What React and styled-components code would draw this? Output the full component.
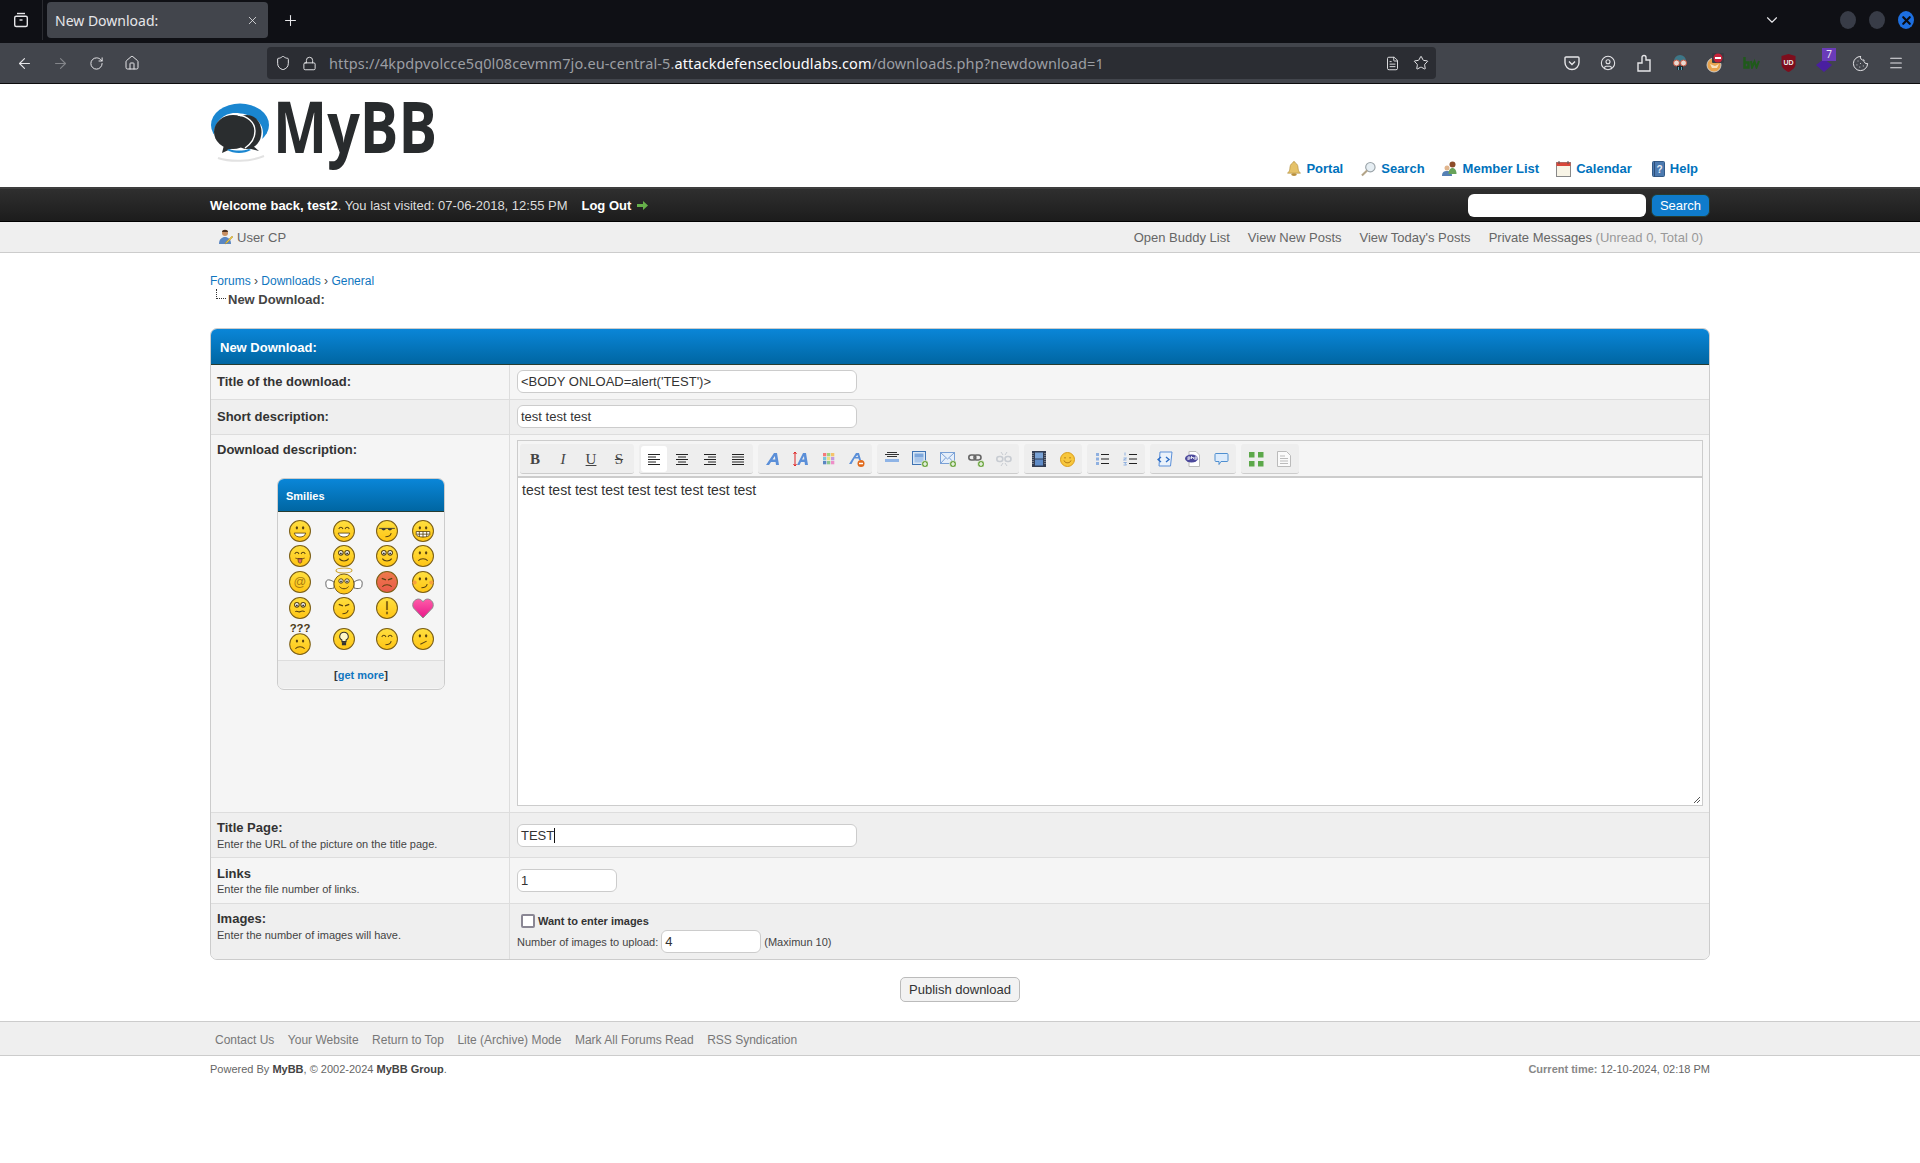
import React from "react";
import styled, { createGlobalStyle } from "styled-components";
import {
  ArrowLeft,
  ArrowRight,
  RotateCw,
  Home,
  Shield,
  Lock,
  Star,
  Menu,
  Plus,
  X,
  ChevronDown,
  CircleUser,
  Cookie,
  FileText,
} from "lucide-react";

const GlobalStyle = createGlobalStyle`
  html, body { margin: 0; padding: 0; background: #fff; }
  body {
    font-family: "Liberation Sans", Arial, sans-serif;
    font-size: 13px;
    color: #333;
  }
  * { box-sizing: border-box; }
`;

/* browser chrome */
const TabBar = styled.div`
  height: 43px;
  padding-bottom: 3px;
  background: #0f1015;
  display: flex;
  align-items: center;
  color: #e6e6e9;
`;
const ViewButton = styled.div`
  width: 43px;
  height: 100%;
  display: flex;
  align-items: center;
  justify-content: center;
  border-right: 1px solid #2a2b30;
`;
const Tab = styled.div`
  width: 221px;
  height: 36px;
  margin-left: 4px;
  padding: 0 9px 0 8px;
  background: #42454c;
  border-radius: 4px;
  display: flex;
  align-items: center;
  justify-content: space-between;
  font-family: "Noto Sans", sans-serif;
  font-size: 14px;
`;
const NewTab = styled.div`
  width: 44px;
  display: flex;
  justify-content: center;
`;
const TabBarRight = styled.div`
  margin-left: auto;
  display: flex;
  align-items: center;
  padding-right: 6px;
`;
const AllTabs = styled.div`
  display: flex;
  margin-right: 46px;
`;
const WindowDot = styled.div`
  width: 16px;
  height: 18px;
  margin-left: 13px;
  border-radius: 50%;
  background: ${(p) => (p.$close ? "#1d6fe0" : "#383c47")};
  color: #0b0c10;
  display: flex;
  align-items: center;
  justify-content: center;
`;
const NavBar = styled.div`
  height: 41px;
  background: #42454c;
  border-bottom: 1px solid #0c0c0d;
  padding: 0 6px;
  display: flex;
  align-items: center;
  color: #e6e6e9;
`;
const NavButton = styled.div`
  width: 36px;
  display: flex;
  justify-content: center;
  align-items: center;
  position: relative;
  color: ${(p) => (p.$off ? "#83858a" : "#e6e6e9")};
`;
const UrlBar = styled.div`
  width: 1169px;
  height: 32px;
  margin-left: 117px;
  background: #2b2d33;
  border-radius: 4px;
  display: flex;
  align-items: center;
  padding: 0 7px 0 8px;
  gap: 11px;
`;
const UrlText = styled.div`
  font-family: "Noto Sans", sans-serif;
  font-size: 14.5px;
  letter-spacing: 0.12px;
  color: #9c9ea3;
  margin-left: 1px;
  white-space: nowrap;
  flex: 1;
  b {
    font-weight: 400;
    color: #fbfbfe;
  }
`;
const UrlRight = styled.div`
  display: flex;
  gap: 13px;
  align-items: center;
`;
const NavRight = styled.div`
  margin-left: auto;
  display: flex;
`;
const Badge = styled.span`
  position: absolute;
  top: -5px;
  right: 6px;
  width: 14px;
  height: 13px;
  background: #6a3bb8;
  color: #e9e5f5;
  font-size: 10px;
  line-height: 13px;
  text-align: center;
  font-family: "Noto Sans", sans-serif;
`;

/* forum header */
const Wrap = styled.div`
  width: 1500px;
  margin: 0 auto;
`;
const Header = styled.div`
  height: 103px;
  display: flex;
  justify-content: space-between;
`;
const LogoLink = styled.div`
  padding-top: 16px;
  height: 88px;
`;
const LogoSvg = styled.svg`
  overflow: visible;
`;
const TopMenu = styled.div`
  align-self: flex-end;
  display: flex;
  gap: 17px;
  padding: 0 12px 9px 0;
`;
const TopLink = styled.a`
  display: flex;
  align-items: center;
  gap: 5px;
  margin-left: ${(p) => p.$extra || 0}px;
  font-weight: bold;
  color: #0072bc;
  font-size: 13px;
  line-height: 18px;
`;
const WelcomeBar = styled.div`
  height: 35px;
  background: linear-gradient(#2f2f2f, #1c1c1c);
  border-top: 2px solid #3d3d3d;
  border-bottom: 1px solid #000;
  color: #ddd;
`;
const WelcomeInner = styled(Wrap)`
  height: 100%;
  display: flex;
  align-items: center;
  justify-content: space-between;
  b {
    color: #fff;
  }
`;
const LogOut = styled.a`
  font-weight: bold;
  color: #fff;
  margin-left: 14px;
  display: inline-flex;
  align-items: center;
  gap: 6px;
`;
const QuickSearch = styled.div`
  display: flex;
  gap: 5px;
`;
const SearchBox = styled.div`
  width: 178px;
  height: 23px;
  background: #fff;
  border-radius: 6px;
`;
const SearchButton = styled.div`
  width: 59px;
  height: 23px;
  border-radius: 6px;
  background: #0f7bcb;
  border: 1px solid #263c30;
  color: #fff;
  text-align: center;
  line-height: 21px;
`;
const UserBar = styled.div`
  height: 31px;
  background: #efefef;
  border-bottom: 1px solid #ccc;
  color: #666;
`;
const UserInner = styled(Wrap)`
  height: 100%;
  display: flex;
  align-items: center;
  justify-content: space-between;
  padding: 0 7px 0 8px;
`;
const UserCp = styled.span`
  display: flex;
  align-items: center;
  gap: 3px;
`;
const UserLinks = styled.div`
  display: flex;
  gap: 18px;
  span {
    color: #999;
  }
`;

/* breadcrumb */
const Breadcrumb = styled.div`
  padding-top: 21px;
  height: 75px;
  font-size: 12px;
  line-height: 15px;
  color: #444;
  a {
    color: #0f76c0;
  }
`;
const Active = styled.div`
  position: relative;
  margin-top: 3px;
  padding-left: 18px;
  font-size: 13px;
  font-weight: bold;
  color: #444;
  line-height: 15px;
  &::before {
    content: "";
    position: absolute;
    left: 6px;
    top: -3px;
    width: 9px;
    height: 9px;
    border-left: 1px dotted #333;
    border-bottom: 1px dotted #333;
  }
`;

/* form table */
const Table = styled.div`
  border: 1px solid #ccc;
  border-radius: 7px;
  overflow: hidden;
  background: #f5f5f5;
`;
const TableHead = styled.div`
  height: 36px;
  background: linear-gradient(#0a86d8, #0066a2);
  border-bottom: 1px solid #263c30;
  color: #fff;
  font-weight: bold;
  padding: 11px 9px 0;
  line-height: 15px;
`;
const Row = styled.div`
  display: grid;
  grid-template-columns: 299px 1fr;
  height: ${(p) => p.$h}px;
  background: ${(p) => (p.$alt ? "#efefef" : "#f5f5f5")};
  border-bottom: ${(p) => (p.$last ? "0" : "1px solid #ddd")};
`;
const LabelCell = styled.div`
  border-right: 1px solid #ddd;
  padding: ${(p) => p.$top}px 6px 0;
`;
const ValueCell = styled.div`
  padding: ${(p) => p.$top}px 7px 0;
`;
const Label = styled.div`
  font-weight: bold;
  color: #333;
  line-height: 16px;
`;
const Desc = styled.div`
  font-size: 11px;
  color: #444;
  line-height: 15px;
  margin-top: ${(p) => (p.$tight ? 0 : 1)}px;
`;
const TextInput = styled.div`
  width: ${(p) => p.$w}px;
  height: 23px;
  background: #fff;
  border: 1px solid #ccc;
  border-radius: 6px;
  padding: 0 3px;
  line-height: 21px;
  font-size: 13px;
  color: #333;
  white-space: nowrap;
`;
const Caret = styled.span`
  display: inline-block;
  width: 1px;
  height: 15px;
  background: #111;
  vertical-align: -3px;
`;
const ImageOption = styled.div`
  display: flex;
  align-items: center;
  gap: 3px;
  font-size: 11px;
  font-weight: bold;
  color: #333;
  padding-left: 4px;
  height: 15px;
`;
const CheckBox = styled.span`
  width: 14px;
  height: 14px;
  background: #fff;
  border: 2px solid #8a8794;
  border-radius: 2px;
`;
const ImageCount = styled.div`
  display: flex;
  align-items: center;
  gap: 3px;
  font-size: 11px;
  color: #444;
  margin-top: 2px;
`;

/* smilies */
const SmiliesBox = styled.div`
  width: 168px;
  height: 212px;
  margin: 20px 0 0 60px;
  border: 1px solid #ccc;
  border-radius: 7px;
  overflow: hidden;
`;
const SmiliesHead = styled.div`
  height: 33px;
  background: linear-gradient(#0a86d8, #0066a2);
  border-bottom: 1px solid #263c30;
  color: #fff;
  font-size: 11px;
  font-weight: bold;
  line-height: 34px;
  padding-left: 8px;
`;
const SmiliesGrid = styled.div`
  display: grid;
  grid-template-columns: 44px 44px 42px 30px;
  grid-template-rows: 25px 26px 26px 26px 36px;
  padding: 6px 0 0 0;
  justify-items: center;
  height: 148px;
`;
const SmileyCell = styled.div`
  display: flex;
  align-items: center;
  justify-content: center;
`;
const GetMore = styled.div`
  height: 28px;
  border-top: 1px solid #ddd;
  background: #efefef;
  text-align: center;
  font-size: 11px;
  font-weight: bold;
  line-height: 29px;
  a {
    color: #0f76c0;
  }
`;

/* editor */
const Editor = styled.div`
  width: 1186px;
  height: 366px;
  background: #fff;
  border: 1px solid #ccc;
  position: relative;
`;
const EditorToolbar = styled.div`
  height: 37px;
  background: #f5f5f5;
  border-bottom: 2px solid #ccc;
  padding: 3px 0 0 2px;
  display: flex;
  gap: 5px;
`;
const ToolGroup = styled.div`
  height: 30px;
  padding: 0 1px;
  background: #eee;
  border-bottom: 1px solid #ccc;
  border-radius: 3px;
  display: flex;
`;
const ToolButton = styled.div`
  width: 28px;
  height: 30px;
  display: flex;
  align-items: center;
  justify-content: center;
  position: relative;
  &::before {
    content: "";
    display: ${(p) => (p.$active ? "block" : "none")};
    position: absolute;
    left: 1px;
    top: 2px;
    width: 26px;
    height: 26px;
    background: #fff;
    border-radius: 3px;
  }
  svg {
    position: relative;
  }
`;
const LetterIcon = styled.span`
  font-family: "Liberation Serif", serif;
  font-size: 15px;
  font-weight: ${(p) => (p.$bold ? "bold" : "normal")};
  font-style: ${(p) => (p.$italic ? "italic" : "normal")};
  text-decoration: ${(p) =>
    p.$under ? "underline" : p.$strike ? "line-through" : "none"};
  color: #444;
`;
const EditorText = styled.div`
  padding: 2px 4px;
  font-size: 14px;
  line-height: 20px;
  color: #333;
`;
const Grip = styled.svg`
  position: absolute;
  right: 1px;
  bottom: 1px;
`;

const SubmitRow = styled.div`
  display: flex;
  justify-content: center;
  padding-top: 17px;
  height: 61px;
`;
const SubmitButton = styled.div`
  width: 120px;
  height: 25px;
  background: #f2f2f2;
  border: 1px solid #bbb;
  border-radius: 5px;
  text-align: center;
  line-height: 23px;
  color: #333;
`;

/* footer */
const FooterBar = styled.div`
  height: 35px;
  background: #efefef;
  border-top: 1px solid #ccc;
  border-bottom: 1px solid #ccc;
`;
const FooterLinks = styled(Wrap)`
  height: 100%;
  padding: 2px 0 0 5px;
  display: flex;
  align-items: center;
  gap: 13.5px;
  font-size: 12px;
  color: #777;
`;
const Copy = styled(Wrap)`
  display: flex;
  justify-content: space-between;
  font-size: 11px;
  line-height: 14px;
  padding-top: 6px;
  color: #666;
  b {
    color: #444;
  }
  div b {
    color: #888;
  }
`;

const ViewIcon = () => (
  <svg width="16" height="16" viewBox="0 0 16 16" fill="none" stroke="#e6e6e9" strokeWidth="1.4">
    <path d="M4 1.5h8" />
    <rect x="1.7" y="4.2" width="12.6" height="10.3" rx="1.5" />
    <path d="M6.5 8h3" />
  </svg>
);

const PocketIcon = () => (
  <svg width="16" height="16" viewBox="0 0 16 16" fill="none" stroke="#e6e6e9" strokeWidth="1.4">
    <path d="M2 2h12a1 1 0 0 1 1 1v4.5A7 7 0 0 1 1 7.5V3a1 1 0 0 1 1-1z" />
    <path d="M5 6.5l3 3 3-3" />
  </svg>
);

const ProfileIcon = () => <CircleUser size={16} strokeWidth={1.6} />;

const PuzzleIcon = () => (
  <svg width="14" height="18" viewBox="0 0 14 18" fill="none" stroke="#e6e6e9" strokeWidth="1.4">
    <path d="M1 17V9h4V3.500a2 2 0 0 1 4 0V6h4v11z" />
  </svg>
);

const MaskIcon = () => (
  <svg width="16" height="18" viewBox="0 0 16 18">
    <path d="M2 7a6 6 0 0 1 12 0v2H2z" fill="#3d7687" />
    <circle cx="4.500" cy="9" r="3" fill="#e9d9d0" stroke="#c9563f" />
    <circle cx="11.500" cy="9" r="3" fill="#e9d9d0" stroke="#c9563f" />
    <path d="M5 12h6v4H5z" fill="#1f2a30" />
    <path d="M6 13h1v3H6zM9 13h1v3H9z" fill="#58a2b8" />
  </svg>
);

const FoxIcon = () => (
  <svg width="20" height="20" viewBox="0 0 20 20">
    <circle cx="8" cy="12" r="7" fill="#e8a34d" stroke="#d6dadf" strokeWidth=".8" />
    <path d="M4 11l5 2 4-2-2 4H6z" fill="#f7e1bf" />
    <rect x="6" y="0" width="12" height="10" rx="1" fill="#3a3c42" />
    <circle cx="12" cy="5" r="4.500" fill="#c8223a" />
    <rect x="9" y="4" width="6" height="2" fill="#fff" />
  </svg>
);

const ShieldRed = () => (
  <svg width="15" height="18" viewBox="0 0 15 18">
    <path d="M7.500 0l7 2v8c0 4-4 6.500-7 8-3-1.500-7-4-7-8V2z" fill="#7e0d1c" />
    <text x="7.500" y="11" textAnchor="middle" fontSize="7" fontWeight="bold" fontFamily="Liberation Sans" fill="#eee">
      UD
    </text>
  </svg>
);

const StackIcon = () => (
  <svg width="18" height="18" viewBox="0 0 18 18">
    <path d="M9 5l8 6-8 7-8-7z" fill="#4a1fa0" />
  </svg>
);

const BwIcon = () => (
  <svg width="18" height="12" viewBox="0 0 18 12" fill="none" stroke="#1f5a1a" strokeWidth="2.4">
    <path d="M1.500 0v10.500h4v-5h-4" />
    <path d="M8 4l1 6.500 2.500-6 2 6 2.500-6.500" strokeWidth="2" />
  </svg>
);

const MyBBLogo = () => (
  <LogoSvg width="230" height="72" viewBox="0 0 230 72">
    <path d="M8 58c12 4 32 4 46-2" fill="none" stroke="#e2e2e2" strokeWidth="2" />
    <ellipse cx="30" cy="25" rx="29" ry="21.500" fill="#1a86d0" />
    <path d="M4 34C4 22 14 13 25 13c12 0 28 6 28 20 0 7-3 12-7 14l7 7-13-4c-6 2-13 2-18 0L9 57l3-11C7 43 4 39 4 34z" fill="#fff" />
    <ellipse cx="37" cy="32" rx="14.500" ry="17" fill="#2a2d2f" />
    <ellipse cx="23" cy="32" rx="19" ry="17" fill="#2a2d2f" />
    <path d="M14 45l-2 8 11-5z" fill="#2a2d2f" />
    <path d="M41 44l8 7-12-3z" fill="#2a2d2f" />
    <path d="M19 49c6 2 14 2 20 0l2 1c-7 4-17 4-24 0z" fill="#1a86d0" />
    <path d="M28 15c9 1 17 7 17 16 0 7-4 13-10 17" fill="none" stroke="#fff" strokeWidth="1.400" />
    <text
      x="63"
      y="53"
      fontFamily="'Open Sans', sans-serif"
      fontWeight="700"
      fontSize="71"
      fill="#282b2d"
      textLength="164"
      lengthAdjust="spacingAndGlyphs"
    >
      MyBB
    </text>
  </LogoSvg>
);

const BellIcon = () => (
  <svg width="14" height="16" viewBox="0 0 15 16">
    <path d="M7.500 0c1 0 1.300.8 1.300 1.500C11.500 2.500 11.800 5 12 8c.2 2 1 3 2.500 4.500H.5C2 11 2.800 10 3 8c.2-3 .5-5.500 3.200-6.500C6.200.8 6.500 0 7.500 0z" fill="#e5c26a" stroke="#a88330" strokeWidth=".6" />
    <ellipse cx="7.500" cy="14" rx="3" ry="1.500" fill="#b98f3b" />
  </svg>
);
const GlassIcon = () => (
  <svg width="15" height="16" viewBox="0 0 16 16">
    <circle cx="10" cy="6" r="5" fill="#e6eef3" stroke="#9aa3a8" strokeWidth="1.200" />
    <path d="M6.500 9.500L1 15" stroke="#b3a488" strokeWidth="2.200" />
  </svg>
);
const MembersIcon = () => (
  <svg width="16" height="16" viewBox="0 0 16 16">
    <circle cx="5" cy="7" r="2.500" fill="#e1b58d" />
    <path d="M0 15c0-4 2-5 5-5s5 1 5 5z" fill="#5580b5" />
    <circle cx="10.500" cy="3.500" r="3" fill="#8c4c2a" />
    <path d="M6.500 13c0-4 2-6 4-6s4 2 4 6z" fill="#68a35a" />
  </svg>
);
const CalendarIcon = () => (
  <svg width="15" height="16" viewBox="0 0 15 16">
    <rect x=".5" y="1.500" width="14" height="14" fill="#f8f4e6" stroke="#888" />
    <rect x=".5" y="1.500" width="14" height="3.500" fill="#d9473a" />
    <path d="M3 0v3M12 0v3" stroke="#555" />
  </svg>
);
const HelpIcon = () => (
  <svg width="13" height="16" viewBox="0 0 13 16">
    <rect x=".5" y=".5" width="12" height="15" rx="1" fill="#4c7ab0" stroke="#335a86" />
    <path d="M2.500.5v15" stroke="#2d4f78" />
    <text x="4.500" y="12" fontSize="10" fontWeight="bold" fontFamily="Liberation Sans" fill="#e8eef5">?</text>
  </svg>
);
const UserCpIcon = () => (
  <svg width="16" height="16" viewBox="0 0 16 16">
    <circle cx="7" cy="4" r="3" fill="#c98f62" />
    <path d="M4 3c0-3 6-3 6 0z" fill="#4a3020" />
    <path d="M1 15c0-5 3-7 6-7s6 2 6 7z" fill="#5a86c2" />
    <path d="M8 13l6-6 1 1-6 6-2 1z" fill="#e8c53d" stroke="#a3802a" strokeWidth=".4" />
  </svg>
);
const LogoutArrow = () => (
  <svg width="11" height="9" viewBox="0 0 11 9">
    <path d="M0 3h6V0l5 4.500L6 9V6H0z" fill="#66b04a" />
  </svg>
);

const lines = (rows) => (
  <svg width="14" height="14" viewBox="0 0 14 14" stroke="#222" strokeWidth="1">
    {rows.map(([x1, x2], i) => (
      <path key={i} d={`M${x1} ${2.5 + i * 2.5}H${x2}`} />
    ))}
  </svg>
);

const Plusdot = () => (
  <g>
    <circle cx="13" cy="13" r="3.500" fill="#6aa33e" stroke="#fff" strokeWidth=".6" />
    <path d="M11 13h4M13 11v4" stroke="#fff" strokeWidth="1.200" />
  </g>
);

const toolIcons = {
  bold: <LetterIcon $bold>B</LetterIcon>,
  italic: <LetterIcon $italic>I</LetterIcon>,
  underline: <LetterIcon $under>U</LetterIcon>,
  strike: <LetterIcon $strike>S</LetterIcon>,
  left: lines([[1, 13], [1, 9], [1, 13], [1, 9], [1, 13]]),
  center: lines([[1, 13], [3, 11], [1, 13], [3, 11], [1, 13]]),
  right: lines([[1, 13], [5, 13], [1, 13], [5, 13], [1, 13]]),
  justify: lines([[1, 13], [1, 13], [1, 13], [1, 13], [1, 13]]),
  font: (
    <svg width="16" height="16" viewBox="0 0 16 16">
      <path d="M1 14L9 2h3l2 12h-3l-.4-3H6l-2 3zM7.500 8.500h2.800L9.900 5z" fill="#5b8fd8" fillRule="evenodd" />
    </svg>
  ),
  size: (
    <svg width="16" height="16" viewBox="0 0 16 16">
      <path d="M4 14l6-12h3l2 12h-3l-.4-3H8l-1.500 3zM9 8.500h2.300L11 5z" fill="#5b8fd8" fillRule="evenodd" />
      <path d="M2 1v14" stroke="#d22" />
      <path d="M.5 3L2 1l1.500 2M.5 13L2 15l1.500-2" fill="none" stroke="#d22" />
    </svg>
  ),
  color: (
    <svg width="12" height="12" viewBox="0 0 12 12">
      {["#f47a7a", "#a0d27c", "#f6c36a", "#7cc4d9", "#f0e080", "#c29ae0", "#5a86c2", "#8fc78f", "#ee8ec8"].map((c, i) => (
        <rect key={c} x={(i % 3) * 4} y={Math.floor(i / 3) * 4} width="3.300" height="3.300" fill={c} />
      ))}
    </svg>
  ),
  removeformat: (
    <svg width="16" height="16" viewBox="0 0 16 16">
      <path d="M0 13L7 2h3l2 7h-2l-.4-1.500H5.500L2.500 13zM6.500 6h2.500L8.500 4z" fill="#5b8fd8" fillRule="evenodd" />
      <circle cx="12" cy="12.500" r="3.500" fill="#e06a1c" />
      <path d="M10 12.500h4" stroke="#fff" strokeWidth="1.300" />
    </svg>
  ),
  hr: (
    <svg width="16" height="16" viewBox="0 0 16 16">
      <path d="M3 1.500h10M1 3.500h14M3 5.500h10" stroke="#333" />
      <rect x="1" y="8" width="14" height="3" fill="#8fb4e6" />
    </svg>
  ),
  image: (
    <svg width="16" height="16" viewBox="0 0 16 16">
      <rect x=".5" y=".5" width="13" height="13" fill="#d8e6f5" stroke="#3f74b4" />
      <rect x="2.500" y="2.500" width="9" height="4" fill="#7da7dc" />
      <rect x="2.500" y="6.500" width="9" height="5" fill="#a9c6ea" />
      <Plusdot />
    </svg>
  ),
  email: (
    <svg width="16" height="16" viewBox="0 0 16 16">
      <rect x=".5" y="1.500" width="14" height="11" fill="#e6effa" stroke="#7aa1d6" />
      <path d="M1 2l6.500 6L14 2M1 12l4.500-5M14 12L9.500 7" fill="none" stroke="#7aa1d6" />
      <Plusdot />
    </svg>
  ),
  link: (
    <svg width="16" height="16" viewBox="0 0 16 16" fill="none">
      <rect x=".8" y="4" width="7" height="5" rx="2.500" stroke="#666" strokeWidth="1.600" />
      <rect x="6" y="4" width="7" height="5" rx="2.500" stroke="#666" strokeWidth="1.600" />
      <Plusdot />
    </svg>
  ),
  unlink: (
    <svg width="16" height="16" viewBox="0 0 16 16" fill="none" stroke="#c8ccd2" strokeWidth="1.600">
      <rect x=".8" y="5.500" width="6" height="5" rx="2.500" />
      <rect x="9" y="5.500" width="6" height="5" rx="2.500" />
      <path d="M5 1l2 3M11 1L9 4M5 15l2-3M11 15l-2-3" strokeWidth="1" />
    </svg>
  ),
  video: (
    <svg width="14" height="16" viewBox="0 0 14 16">
      <rect width="14" height="16" fill="#333d52" />
      <rect x="3" y="1.500" width="8" height="6" fill="#7aa3d6" />
      <rect x="3" y="8.500" width="8" height="6" fill="#5f8cc8" />
      <path d="M1 2v12M13 2v12" stroke="#bbb" strokeDasharray="1 1" />
    </svg>
  ),
  emoticon: (
    <svg width="15" height="15" viewBox="0 0 15 15">
      <circle cx="7.500" cy="7.500" r="7" fill="#f7c73d" stroke="#d99c1c" />
      <path d="M4 8.500c1 3 6 3 7 0" fill="none" stroke="#a86f10" />
      <path d="M5 5v1.500M10 5v1.500" stroke="#a86f10" />
    </svg>
  ),
  bullet: (
    <svg width="14" height="14" viewBox="0 0 14 14">
      <g fill="#8fb0e0">
        <rect x="1" y="1" width="3" height="3" />
        <rect x="1" y="5.500" width="3" height="3" />
        <rect x="1" y="10" width="3" height="3" />
      </g>
      <path d="M6 2.500h8M6 7h8M6 11.500h8" stroke="#222" />
    </svg>
  ),
  ordered: (
    <svg width="14" height="14" viewBox="0 0 14 14">
      <path d="M2 0.500v3M.5 6h3l-3 2h3M.5 10.500h3l-1.500 1 1.500 1.500h-3" fill="none" stroke="#8fb0e0" />
      <path d="M6 2.500h8M6 7h8M6 11.500h8" stroke="#222" />
    </svg>
  ),
  code: (
    <svg width="16" height="16" viewBox="0 0 16 16">
      <path d="M3 1h12l-1.500 14H2z" fill="#eaf2fb" stroke="#5b8fd8" />
      <path d="M4 6L1 8.500 4 11M9 6l3 2.500L9 11" fill="none" stroke="#2f6fc6" strokeWidth="1.400" />
    </svg>
  ),
  php: (
    <svg width="16" height="16" viewBox="0 0 16 16">
      <path d="M4 .5h7l3.500 3.500v11.500H4z" fill="#fff" stroke="#bbb" />
      <ellipse cx="6.500" cy="7.500" rx="6.500" ry="4" fill="#4d4a9c" />
      <path d="M3 9V6h2v2H3M6.500 5v3M6.500 6.500h2V8M10 9V6h2v2h-2" fill="none" stroke="#fff" strokeWidth=".8" />
    </svg>
  ),
  quote: (
    <svg width="15" height="15" viewBox="0 0 15 15">
      <path d="M2 1.500h11a1 1 0 0 1 1 1v6a1 1 0 0 1-1 1H7l-2 3v-3H2a1 1 0 0 1-1-1v-6a1 1 0 0 1 1-1z" fill="#dcebfb" stroke="#4f8fd0" />
    </svg>
  ),
  maximize: (
    <svg width="16" height="16" viewBox="0 0 16 16" fill="#5ca84a">
      <rect x="1" y="1" width="5.500" height="5.500" />
      <rect x="10" y="1" width="5.500" height="5.500" />
      <rect x="1" y="10" width="5.500" height="5.500" />
      <rect x="10" y="10" width="5.500" height="5.500" />
    </svg>
  ),
  source: (
    <svg width="14" height="16" viewBox="0 0 14 16">
      <path d="M.5.500h9l4 4v11H.5z" fill="#fafafa" stroke="#bbb" />
      <path d="M3 5h5M3 7.500h8M3 10h8M3 12.500h8" stroke="#bbb" />
    </svg>
  ),
};

const toolGroups = [
  ["bold", "italic", "underline", "strike"],
  ["left", "center", "right", "justify"],
  ["font", "size", "color", "removeformat"],
  ["hr", "image", "email", "link", "unlink"],
  ["video", "emoticon"],
  ["bullet", "ordered"],
  ["code", "php", "quote"],
  ["maximize", "source"],
];

const eyes = {
  dot: (
    <>
      <ellipse cx="7.500" cy="7.500" rx="1.100" ry="1.500" fill="#5a4310" />
      <ellipse cx="13.500" cy="7.500" rx="1.100" ry="1.500" fill="#5a4310" />
    </>
  ),
  arc: <path d="M5.500 8.500c1-2 3-2 4 0M11.500 8.500c1-2 3-2 4 0" fill="none" stroke="#5a4310" />,
  round: (
    <>
      <circle cx="7.500" cy="7.500" r="2.200" fill="#fff" stroke="#5a4310" />
      <circle cx="13.500" cy="7.500" r="2.200" fill="#fff" stroke="#5a4310" />
      <circle cx="7.500" cy="8" r=".9" fill="#333" />
      <circle cx="13.500" cy="8" r=".9" fill="#333" />
    </>
  ),
  shades: <path d="M3 8h15M5.500 8.500a2 2 0 0 0 3.500 0zM11.500 8.500a2 2 0 0 0 3.500 0z" fill="#333" stroke="#333" strokeWidth=".8" />,
  flat: <path d="M5.500 7l4 1.500M15.500 7l-4 1.500" stroke="#5a4310" strokeWidth="1.200" />,
  wink: <path d="M5.500 8.500h4M11.500 8.500h4" stroke="#5a4310" />,
};
const mouths = {
  grin: <path d="M5 12.500h11c-1 5-10 5-11 0z" fill="#fff" stroke="#5a4310" strokeWidth=".8" />,
  smile: <path d="M6 13c2 3 7 3 9 0" fill="none" stroke="#5a4310" />,
  smirk: <path d="M9 16c3 0 5-1 5.500-3.500" fill="none" stroke="#5a4310" />,
  teeth: <path d="M4 11h13v3c-1 3-12 3-13 0zM7 11v5M10.500 11v5.500M14 11v5M4 13.500h13" fill="#fff" stroke="#5a4310" strokeWidth=".8" />,
  tongue: <path d="M6 12.500c3 1 6 1 9 0M8.500 13l.5 3.500c1 1 2.500 1 3 0l.5-3.500z" fill="#ea6a6a" stroke="#5a4310" strokeWidth=".7" />,
  sad: <path d="M6 15c2-2.500 7-2.500 9 0" fill="none" stroke="#5a4310" />,
  wave: <path d="M6 14c1.500-1.500 2.500 1 4.500 0s3-1 4.500 0" fill="none" stroke="#5a4310" />,
  oblique: <path d="M8 15.500l6-3" fill="none" stroke="#5a4310" />,
};

const Face = ({ eye, mouth, fill = "url(#sm)", children }) => (
  <svg width="22" height="22" viewBox="0 0 21 21">
    <circle cx="10.500" cy="10.500" r="10" fill={fill} stroke="#7c5f17" />
    {eyes[eye]}
    {mouths[mouth]}
    {children}
  </svg>
);

const AngelFace = () => (
  <svg width="38" height="30" viewBox="0 0 38 30">
    <path d="M9 15C3 11 0 13 1 18c0 4 4 4 8 3zM29 15c6-4 9-2 8 3 0 4-4 4-8 3z" fill="#fff" stroke="#444" strokeWidth=".8" />
    <ellipse cx="19" cy="3.500" rx="8" ry="2.500" fill="none" stroke="#cfa93c" strokeWidth="1.200" />
    <circle cx="19" cy="17" r="10" fill="url(#sm)" stroke="#7c5f17" />
    <g transform="translate(8.500 6.500)">
      {eyes.round}
      {mouths.smile}
    </g>
  </svg>
);

const QuestionFace = () => (
  <svg width="22" height="36" viewBox="0 0 21 35">
    <text x="10.500" y="10.500" textAnchor="middle" fontSize="11" fontWeight="bold" fontFamily="Liberation Sans" fill="#4a3a18">???</text>
    <g transform="translate(0 12)">
      <circle cx="10.500" cy="10.500" r="10" fill="url(#sm)" stroke="#7c5f17" />
      {eyes.dot}
      {mouths.sad}
    </g>
  </svg>
);

const Heart = () => (
  <svg width="22" height="21" viewBox="0 0 22 21">
    <path d="M11 20L1.500 10C-1 5 3 1 6.500 1 9 1 10.500 3 11 4c.5-1 2-3 4.500-3C19 1 23 5 20.500 10z" fill="url(#hr)" stroke="#8d8d8d" />
  </svg>
);

const SmileyDefs = () => (
  <svg width="0" height="0" style={{ position: "absolute" }}>
    <defs>
      <linearGradient id="sm" x1="0" y1="0" x2="0" y2="1">
        <stop offset="0" stopColor="#ffe040" />
        <stop offset="1" stopColor="#ffc414" />
      </linearGradient>
      <linearGradient id="rd" x1="0" y1="0" x2="0" y2="1">
        <stop offset="0" stopColor="#ee7a4a" />
        <stop offset="1" stopColor="#e85a4a" />
      </linearGradient>
      <linearGradient id="hr" x1="0" y1="0" x2="0" y2="1">
        <stop offset="0" stopColor="#ff5ca8" />
        <stop offset="1" stopColor="#e8188a" />
      </linearGradient>
    </defs>
  </svg>
);

const smilies = [
  <Face eye="dot" mouth="grin" />,
  <Face eye="arc" mouth="grin" />,
  <Face eye="shades" mouth="smirk" />,
  <Face eye="dot" mouth="teeth" />,
  <Face eye="arc" mouth="tongue" />,
  <Face eye="round" mouth="smile" />,
  <Face eye="round" mouth="smile" />,
  <Face eye="dot" mouth="sad" />,
  <Face eye="none" mouth="none">
    <text x="10.500" y="14.500" textAnchor="middle" fontSize="12" fontFamily="Liberation Sans" fill="#a97c10">@</text>
  </Face>,
  <AngelFace />,
  <Face eye="flat" mouth="sad" fill="url(#rd)" />,
  <Face eye="dot" mouth="smirk">
    <circle cx="2.500" cy="11" r="2" fill="#f7a13d" />
    <circle cx="18.500" cy="11" r="2" fill="#f7a13d" />
  </Face>,
  <Face eye="round" mouth="wave" />,
  <Face eye="flat" mouth="smirk" />,
  <Face eye="none" mouth="none">
    <rect x="9.500" y="4" width="2" height="8.500" fill="#8a6a12" />
    <rect x="9.500" y="14" width="2" height="2.500" fill="#8a6a12" />
  </Face>,
  <Heart />,
  <QuestionFace />,
  <Face eye="none" mouth="none">
    <path d="M10.500 4a4 4 0 0 0-2 7.500V13h4v-1.500a4 4 0 0 0-2-7.500z" fill="#fff8c9" stroke="#333" />
    <rect x="8.500" y="13.500" width="4" height="3" fill="#333" />
  </Face>,
  <Face eye="arc" mouth="smirk" />,
  <Face eye="dot" mouth="oblique" />,
];

const topLinks = [
  { icon: <BellIcon />, text: "Portal" },
  { icon: <GlassIcon />, text: "Search", extra: 1 },
  { icon: <MembersIcon />, text: "Member List" },
  { icon: <CalendarIcon />, text: "Calendar" },
  { icon: <HelpIcon />, text: "Help", extra: 3 },
];

const footerLinks = [
  "Contact Us",
  "Your Website",
  "Return to Top",
  "Lite (Archive) Mode",
  "Mark All Forums Read",
  "RSS Syndication",
];

const App = () => {
  return (
    <>
      <GlobalStyle />
      <SmileyDefs />
      <TabBar>
        <ViewButton>
          <ViewIcon />
        </ViewButton>
        <Tab>
          New Download:
          <X size={13} strokeWidth={1.5} />
        </Tab>
        <NewTab>
          <Plus size={17} strokeWidth={1.5} />
        </NewTab>
        <TabBarRight>
          <AllTabs>
            <ChevronDown size={18} strokeWidth={1.5} />
          </AllTabs>
          <WindowDot />
          <WindowDot />
          <WindowDot $close>
            <X size={13} strokeWidth={4} />
          </WindowDot>
        </TabBarRight>
      </TabBar>
      <NavBar>
        <NavButton>
          <ArrowLeft size={17} strokeWidth={1.6} />
        </NavButton>
        <NavButton $off>
          <ArrowRight size={17} strokeWidth={1.6} />
        </NavButton>
        <NavButton>
          <RotateCw size={15} strokeWidth={1.6} />
        </NavButton>
        <NavButton>
          <Home size={16} strokeWidth={1.5} />
        </NavButton>
        <UrlBar>
          <Shield size={16} strokeWidth={1.5} />
          <Lock size={15} strokeWidth={1.5} />
          <UrlText>
            https://4kpdpvolcce5q0l08cevmm7jo.eu-central-5.<b>attackdefensecloudlabs.com</b>/downloads.php?newdownload=1
          </UrlText>
          <UrlRight>
            <FileText size={15} strokeWidth={1.5} />
            <Star size={16} strokeWidth={1.5} />
          </UrlRight>
        </UrlBar>
        <NavRight>
          <NavButton>
            <PocketIcon />
          </NavButton>
          <NavButton>
            <ProfileIcon />
          </NavButton>
          <NavButton>
            <PuzzleIcon />
          </NavButton>
          <NavButton>
            <MaskIcon />
          </NavButton>
          <NavButton>
            <FoxIcon />
          </NavButton>
          <NavButton>
            <BwIcon />
          </NavButton>
          <NavButton>
            <ShieldRed />
          </NavButton>
          <NavButton>
            <StackIcon />
            <Badge>7</Badge>
          </NavButton>
          <NavButton>
            <Cookie size={17} strokeWidth={1.4} />
          </NavButton>
          <NavButton>
            <Menu size={16} strokeWidth={1.6} />
          </NavButton>
        </NavRight>
      </NavBar>

      <Wrap>
        <Header>
          <LogoLink>
            <MyBBLogo />
          </LogoLink>
          <TopMenu>
            {topLinks.map(({ icon, text, extra }) => (
              <TopLink key={text} $extra={extra}>
                {icon}
                {text}
              </TopLink>
            ))}
          </TopMenu>
        </Header>
      </Wrap>
      <WelcomeBar>
        <WelcomeInner>
          <span>
            <b>Welcome back, test2</b>. You last visited: 07-06-2018, 12:55 PM
            <LogOut>
              Log Out <LogoutArrow />
            </LogOut>
          </span>
          <QuickSearch>
            <SearchBox />
            <SearchButton>Search</SearchButton>
          </QuickSearch>
        </WelcomeInner>
      </WelcomeBar>
      <UserBar>
        <UserInner>
          <UserCp>
            <UserCpIcon /> User CP
          </UserCp>
          <UserLinks>
            <a>Open Buddy List</a>
            <a>View New Posts</a>
            <a>View Today's Posts</a>
            <a>
              Private Messages <span>(Unread 0, Total 0)</span>
            </a>
          </UserLinks>
        </UserInner>
      </UserBar>

      <Wrap>
        <Breadcrumb>
          <a>Forums</a> › <a>Downloads</a> › <a>General</a>
          <Active>New Download:</Active>
        </Breadcrumb>
        <Table>
          <TableHead>New Download:</TableHead>
          <Row $h={35}>
            <LabelCell $top={9}>
              <Label>Title of the download:</Label>
            </LabelCell>
            <ValueCell $top={5}>
              <TextInput $w={340}>{"<BODY ONLOAD=alert('TEST')>"}</TextInput>
            </ValueCell>
          </Row>
          <Row $h={35} $alt>
            <LabelCell $top={9}>
              <Label>Short description:</Label>
            </LabelCell>
            <ValueCell $top={5}>
              <TextInput $w={340}>test test test</TextInput>
            </ValueCell>
          </Row>
          <Row $h={378}>
            <LabelCell $top={7}>
              <Label>Download description:</Label>
              <SmiliesBox>
                <SmiliesHead>Smilies</SmiliesHead>
                <SmiliesGrid>
                  {smilies.map((s, i) => (
                    <SmileyCell key={i}>{s}</SmileyCell>
                  ))}
                </SmiliesGrid>
                <GetMore>
                  [<a>get more</a>]
                </GetMore>
              </SmiliesBox>
            </LabelCell>
            <ValueCell $top={5}>
              <Editor>
                <EditorToolbar>
                  {toolGroups.map((group, i) => (
                    <ToolGroup key={i}>
                      {group.map((name) => (
                        <ToolButton key={name} $active={name === "left"}>
                          {toolIcons[name]}
                        </ToolButton>
                      ))}
                    </ToolGroup>
                  ))}
                </EditorToolbar>
                <EditorText>test test test test test test test test test</EditorText>
                <Grip width="8" height="8" viewBox="0 0 8 8" stroke="#555">
                  <path d="M1 7l6-6M4 7l3-3" />
                </Grip>
              </Editor>
            </ValueCell>
          </Row>
          <Row $h={45} $alt>
            <LabelCell $top={7}>
              <Label>Title Page:</Label>
              <Desc>Enter the URL of the picture on the title page.</Desc>
            </LabelCell>
            <ValueCell $top={11}>
              <TextInput $w={340}>
                TEST
                <Caret />
              </TextInput>
            </ValueCell>
          </Row>
          <Row $h={46}>
            <LabelCell $top={8}>
              <Label>Links</Label>
              <Desc $tight>Enter the file number of links.</Desc>
            </LabelCell>
            <ValueCell $top={11}>
              <TextInput $w={100}>1</TextInput>
            </ValueCell>
          </Row>
          <Row $h={55} $alt $last>
            <LabelCell $top={7}>
              <Label>Images:</Label>
              <Desc>Enter the number of images will have.</Desc>
            </LabelCell>
            <ValueCell $top={9}>
              <ImageOption>
                <CheckBox />
                Want to enter images
              </ImageOption>
              <ImageCount>
                Number of images to upload:
                <TextInput $w={100}>4</TextInput>
                (Maximun 10)
              </ImageCount>
            </ValueCell>
          </Row>
        </Table>
        <SubmitRow>
          <SubmitButton>Publish download</SubmitButton>
        </SubmitRow>
      </Wrap>

      <FooterBar>
        <FooterLinks>
          {footerLinks.map((t) => (
            <a key={t}>{t}</a>
          ))}
        </FooterLinks>
      </FooterBar>
      <Copy>
        <span>
          Powered By <b>MyBB</b>, © 2002-2024 <b>MyBB Group</b>.
        </span>
        <div>
          <b>Current time:</b> 12-10-2024, 02:18 PM
        </div>
      </Copy>
    </>
  );
};

export default App;
